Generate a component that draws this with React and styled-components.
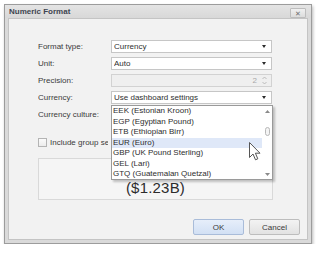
import React from "react";
import styled, { createGlobalStyle } from "styled-components";

const Global = createGlobalStyle`
  html, body { margin: 0; padding: 0; background: #ffffff; }
  body { font-family: "Liberation Sans", Arial, sans-serif; font-size: 8px; color: #3b3b3b; }
  * { box-sizing: border-box; }
`;

const Page = styled.div`
  padding: 4px 0 0 4px;
`;

const Dialog = styled.div`
  width: 308px;
  height: 240px;
  display: flex;
  flex-direction: column;
  border: 1px solid #9c9c9c;
  background: #dadada;
  box-shadow: 1px 2px 3px rgba(0, 0, 0, 0.28);
`;

const TitleBar = styled.div`
  height: 13px;
  flex: none;
  display: flex;
  align-items: center;
  justify-content: space-between;
  padding: 0 5px 0 4px;
  background: linear-gradient(#e4e4e4, #d8d8d8);
`;

const Title = styled.span`
  font-weight: bold;
  font-size: 8px;
  color: #3e4550;
`;

const CloseButton = styled.div`
  width: 16px;
  height: 10px;
  margin-top: 3px;
  border: 1px solid #bdbdbd;
  border-radius: 1px;
  background: linear-gradient(#f0f0f0, #dcdcdc);
  display: flex;
  align-items: center;
  justify-content: center;
  color: #707070;
  font-size: 7px;
  line-height: 1;
`;

const Body = styled.div`
  flex: 1;
  margin: 0 3px 3px 3px;
  border: 1px solid #c4c4c4;
  background: #f2f2f2;
  display: flex;
  flex-direction: column;
  padding: 21px 7px 0 29px;
`;

const Form = styled.div`
  display: grid;
  grid-template-columns: 73px 161px;
  grid-auto-rows: 13px;
  row-gap: 4px;
  align-items: center;
`;

const Label = styled.div`
  font-size: 8px;
  color: #3b3b3b;
  white-space: nowrap;
  overflow: hidden;
  max-width: ${(p) => (p.$clip ? `${p.$clip}px` : "none")};
`;

const ComboWrap = styled.div`
  position: relative;
  height: 13px;
`;

const Combo = styled.div`
  height: 13px;
  display: flex;
  align-items: center;
  padding: 0 4px 0 2px;
  border: 1px solid ${(p) => (p.$disabled ? "#d2d2d2" : "#c6c6c6")};
  background: ${(p) => (p.$disabled ? "#efefef" : "#ffffff")};
  color: #2f2f2f;
  font-size: 8px;
`;

const ComboText = styled.span`
  flex: 1;
  white-space: nowrap;
  overflow: hidden;
`;

const Arrow = styled.span`
  width: 0;
  height: 0;
  border-left: 2.5px solid transparent;
  border-right: 2.5px solid transparent;
  border-top: 3px solid #2a2a2a;
  margin-right: 1px;
`;

const SpinValue = styled.span`
  color: #a8a8a8;
  margin-right: 5px;
`;

const Spin = styled.svg`
  display: block;
`;

const CheckRow = styled.div`
  display: flex;
  align-items: center;
  gap: 3px;
  height: 9px;
  margin-top: 17px;
`;

const CheckBox = styled.div`
  width: 9px;
  height: 9px;
  border: 1px solid #b4b4b4;
  background: linear-gradient(#fbfbfb, #ececec);
`;

const Preview = styled.div`
  width: 235px;
  height: 42px;
  margin-top: 11px;
  border: 1px solid #d9d9d9;
  background: #f5f5f5;
  display: flex;
  align-items: flex-end;
  justify-content: center;
  padding-bottom: 3px;
  font-size: 15px;
  color: #2c2c2c;
  letter-spacing: 0.2px;
`;

const Footer = styled.div`
  display: flex;
  justify-content: flex-end;
  gap: 5px;
  margin-top: 19px;
`;

const Button = styled.div`
  width: 51px;
  height: 16px;
  display: flex;
  align-items: center;
  justify-content: center;
  border-radius: 2px;
  font-size: 8px;
  color: #3a3a3a;
  border: 1px solid ${(p) => (p.$primary ? "#a9bcd9" : "#bdbdbd")};
  background: ${(p) =>
    p.$primary
      ? "linear-gradient(#e6eefa, #d2e0f4)"
      : "linear-gradient(#f3f3f3, #e2e2e2)"};
`;

const DropList = styled.div`
  position: absolute;
  left: 0;
  top: calc(100% + 1px);
  width: 162px;
  height: 75px;
  border: 1px solid #9a9a9a;
  background: #ffffff;
  box-shadow: 2px 2px 2px rgba(0, 0, 0, 0.22);
  display: flex;
  z-index: 5;
`;

const Items = styled.div`
  flex: 1;
  display: flex;
  flex-direction: column;
`;

const Item = styled.div`
  height: 10.5px;
  line-height: 10.5px;
  padding-left: 1px;
  font-size: 8px;
  color: #2e2e2e;
  white-space: nowrap;
  background: ${(p) => (p.$selected ? "#dfe8f8" : "transparent")};
`;

const ScrollBar = styled.div`
  width: 10px;
  display: flex;
  flex-direction: column;
  align-items: center;
  padding: 4px 0 3px;
`;

const ScrollTrack = styled.div`
  flex: 1;
  display: flex;
  flex-direction: column;
  align-items: center;
  padding-top: 14px;
`;

const Thumb = styled.div`
  width: 5px;
  height: 9px;
  border: 1px solid #b8b8b8;
  border-radius: 3px;
  background: #f4f4f4;
`;

const Cursor = styled.svg`
  position: absolute;
  left: 137px;
  top: 36px;
  z-index: 6;
`;

function SmallArrow({ up }) {
  return (
    <svg width="5" height="3" viewBox="0 0 5 3">
      <path d={up ? "M0 3 L2.5 0 L5 3 Z" : "M0 0 L2.5 3 L5 0 Z"} fill="#8a8a8a" />
    </svg>
  );
}

const items = [
  "EEK (Estonian Kroon)",
  "EGP (Egyptian Pound)",
  "ETB (Ethiopian Birr)",
  "EUR (Euro)",
  "GBP (UK Pound Sterling)",
  "GEL (Lari)",
  "GTQ (Guatemalan Quetzal)",
];

export default function App() {
  return (
    <>
      <Global />
      <Page>
        <Dialog>
          <TitleBar>
            <Title>Numeric Format</Title>
            <CloseButton>✕</CloseButton>
          </TitleBar>
          <Body>
            <Form>
              <Label>Format type:</Label>
              <Combo>
                <ComboText>Currency</ComboText>
                <Arrow />
              </Combo>
              <Label>Unit:</Label>
              <Combo>
                <ComboText>Auto</ComboText>
                <Arrow />
              </Combo>
              <Label>Precision:</Label>
              <Combo $disabled>
                <ComboText />
                <SpinValue>2</SpinValue>
                <Spin width="5" height="9" viewBox="0 0 5 9">
                  <path d="M0.5 3 L2.5 1 L4.5 3" stroke="#b0b0b0" fill="none" strokeWidth="0.8" />
                  <path d="M0.5 6 L2.5 8 L4.5 6" stroke="#b0b0b0" fill="none" strokeWidth="0.8" />
                </Spin>
              </Combo>
              <Label>Currency:</Label>
              <ComboWrap>
                <Combo>
                  <ComboText>Use dashboard settings</ComboText>
                  <Arrow />
                </Combo>
                <DropList>
                  <Items>
                    {items.map((t) => (
                      <Item key={t} $selected={t.startsWith("EUR")}>
                        {t}
                      </Item>
                    ))}
                  </Items>
                  <ScrollBar>
                    <SmallArrow up />
                    <ScrollTrack>
                      <Thumb />
                    </ScrollTrack>
                    <SmallArrow />
                  </ScrollBar>
                  <Cursor width="12" height="19" viewBox="0 0 12 19">
                    <path
                      d="M0.5 0.5 L0.5 15.5 L4 12 L6.5 17.8 L8.8 16.8 L6.4 11.2 L11 11.2 Z"
                      fill="#ffffff"
                      stroke="#555555"
                      strokeWidth="1"
                      strokeLinejoin="round"
                    />
                  </Cursor>
                </DropList>
              </ComboWrap>
              <Label>Currency culture:</Label>
              <Combo>
                <ComboText />
                <Arrow />
              </Combo>
            </Form>
            <CheckRow>
              <CheckBox />
              <Label $clip={58}>Include group separator</Label>
            </CheckRow>
            <Preview>($1.23B)</Preview>
            <Footer>
              <Button $primary>OK</Button>
              <Button>Cancel</Button>
            </Footer>
          </Body>
        </Dialog>
      </Page>
    </>
  );
}
